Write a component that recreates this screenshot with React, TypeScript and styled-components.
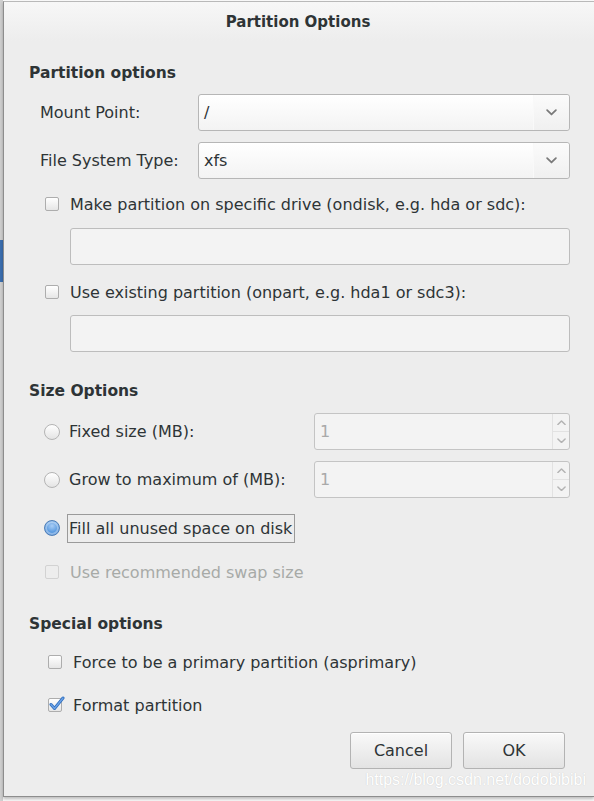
import React from 'react';
import styled, { createGlobalStyle } from 'styled-components';

const GlobalStyle = createGlobalStyle`
  html, body {
    margin: 0;
    padding: 0;
    background: #f4f4f4;
  }
  * { box-sizing: border-box; }
`;

const Page = styled.div`
  display: flex;
  width: 594px;
  height: 801px;
  overflow: hidden;
  background: #fbfbfb;
`;

const Edge = styled.div`
  width: 3px;
  flex-shrink: 0;
  background: linear-gradient(#cfcfcf 0 240px, #3b6fb0 240px 282px, #d0d0d0 282px);
`;

const Dialog = styled.div`
  position: relative;
  flex: 1;
  margin-top: 1px;
  height: 796px;
  background: #ededed;
  border-left: 1px solid #8d8d8d;
  border-top: 1px solid #b9b9b9;
  border-bottom: 1px solid #8d8d8d;
  box-shadow: 0 2px 3px rgba(0, 0, 0, 0.25);
  font-family: "DejaVu Sans", "Open Sans", sans-serif;
  font-size: 16px;
  color: #2e3436;
`;

const TitleBar = styled.div`
  height: 39px;
  display: flex;
  align-items: center;
  justify-content: center;
  padding-right: 2px;
  font-weight: 700;
  font-size: 15px;
  background: linear-gradient(#f7f7f7, #ededed);
`;

const Body = styled.div`
  display: flex;
  flex-direction: column;
  padding: 0 24px 0 25px;
`;

const Heading = styled.div<{ $mt: number }>`
  margin-top: ${p => p.$mt}px;
  height: 20px;
  line-height: 20px;
  font-weight: 700;
  font-size: 15.5px;
`;

const FieldRow = styled.div<{ $mt: number }>`
  margin-top: ${p => p.$mt}px;
  display: grid;
  grid-template-columns: 158px 1fr;
  align-items: center;
  padding-left: 11px;
`;

const Combo = styled.div`
  height: 37px;
  display: flex;
  border: 1px solid #b6b6b6;
  border-radius: 3px;
  background: linear-gradient(#ffffff, #f3f3f3);
  box-shadow: inset 0 1px 0 #fff;
`;

const ComboText = styled.div`
  flex: 1;
  display: flex;
  align-items: center;
  padding-left: 5px;
`;

const ComboButton = styled.div`
  width: 36px;
  display: flex;
  align-items: center;
  justify-content: center;
  border-left: 1px solid #f9f9f9;
  background: linear-gradient(#fbfbfb, #f0f0f0);
  border-radius: 0 3px 3px 0;
`;

const CheckRow = styled.label<{ $mt: number; $indent: number; $disabled?: boolean }>`
  margin-top: ${p => p.$mt}px;
  height: 20px;
  display: flex;
  align-items: center;
  gap: 11px;
  padding-left: ${p => p.$indent}px;
  color: ${p => (p.$disabled ? '#a7aaa7' : '#2e3436')};
`;

const Box = styled.span<{ $disabled?: boolean }>`
  position: relative;
  width: 14px;
  height: 14px;
  flex-shrink: 0;
  border: 1px solid ${p => (p.$disabled ? '#d2d2d2' : '#adadad')};
  border-radius: 2px;
  background: ${p => (p.$disabled ? '#ededed' : 'linear-gradient(#ffffff, #e6e6e6)')};
`;

const Tick = styled.svg`
  position: absolute;
  left: -1px;
  top: -4px;
`;

const Entry = styled.div<{ $mt: number }>`
  margin-top: ${p => p.$mt}px;
  margin-left: 41px;
  height: 37px;
  border: 1px solid #bdbdbd;
  border-radius: 3px;
  background: #f3f3f3;
`;

const RadioRow = styled.div<{ $mt: number }>`
  margin-top: ${p => p.$mt}px;
  display: grid;
  grid-template-columns: 270px 1fr;
  align-items: center;
  padding-left: 15px;
`;

const RadioLabel = styled.div`
  display: flex;
  align-items: center;
  gap: 9px;
  height: 30px;
`;

const Radio = styled.span<{ $on?: boolean }>`
  width: 16px;
  height: 16px;
  flex-shrink: 0;
  border-radius: 50%;
  border: 1px solid ${p => (p.$on ? '#4f7fb8' : '#b4b4b4')};
  background: ${p =>
    p.$on
      ? 'radial-gradient(circle at 50% 35%, #a9cdf5 0, #5b9be0 55%, #3f7ccc 100%)'
      : 'linear-gradient(#ffffff, #e4e4e4)'};
  box-shadow: ${p => (p.$on ? 'inset 0 0 0 2px rgba(255,255,255,0.35)' : 'none')};
`;

const RadioText = styled.span<{ $focus?: boolean }>`
  margin-left: ${p => (p.$focus ? -2 : 0)}px;
  padding: ${p => (p.$focus ? '4px 2px 4px 1px' : '0')};
  border: ${p => (p.$focus ? '1px solid #9a9a9a' : 'none')};
`;

const Spin = styled.div`
  height: 37px;
  display: flex;
  border: 1px solid #c4c4c4;
  border-radius: 3px;
  background: #f3f3f3;
  color: #a9a9a9;
`;

const SpinText = styled.div`
  flex: 1;
  display: flex;
  align-items: center;
  padding-left: 5px;
`;

const SpinButtons = styled.div`
  width: 17px;
  display: flex;
  flex-direction: column;
  border-left: 1px solid #e2e2e2;
`;

const SpinHalf = styled.div<{ $top?: boolean }>`
  flex: 1;
  display: flex;
  align-items: center;
  justify-content: center;
  border-bottom: ${p => (p.$top ? '1px solid #e2e2e2' : 'none')};
`;

const ButtonBar = styled.div`
  margin-top: 17px;
  display: flex;
  justify-content: flex-end;
  gap: 11px;
  padding-right: 5px;
`;

const Button = styled.button`
  width: 102px;
  height: 37px;
  border: 1px solid #b3b3b3;
  border-radius: 3px;
  background: linear-gradient(#f9f9f9, #e3e3e3);
  box-shadow: inset 0 1px 0 #fff;
  font-family: inherit;
  font-size: 16px;
  color: #2e3436;
`;

const Watermark = styled.div`
  position: absolute;
  right: 8px;
  bottom: 7px;
  font-family: "Liberation Sans", Arial, sans-serif;
  font-size: 16px;
  color: #ffffff;
  text-shadow: 0 0 1px #c4c4c4;
`;

const Chevron = ({ up, color, w }: { up?: boolean; color: string; w: number }) => (
  <svg width={w} height={w * 0.6} viewBox="0 0 10 6">
    <path
      d={up ? 'M1 5 L5 1 L9 5' : 'M1 1 L5 5 L9 1'}
      fill="none"
      stroke={color}
      strokeWidth="1.6"
      strokeLinecap="round"
      strokeLinejoin="round"
    />
  </svg>
);

const Check = ({ mt, indent, label, checked, disabled }: {
  mt: number; indent: number; label: string; checked?: boolean; disabled?: boolean;
}) => (
  <CheckRow $mt={mt} $indent={indent} $disabled={disabled}>
    <Box $disabled={disabled}>
      {checked && (
        <Tick width="17" height="17" viewBox="0 0 17 17">
          <path d="M3 9.5 L6.5 13.5 L15 3" fill="none" stroke="#2f6fc0" strokeWidth="3" strokeLinecap="round" strokeLinejoin="round" />
          <path d="M3 9.5 L6.5 13.5 L15 3" fill="none" stroke="#6ea3e6" strokeWidth="1.2" strokeLinecap="round" strokeLinejoin="round" />
        </Tick>
      )}
    </Box>
    {label}
  </CheckRow>
);

const SpinBox = () => (
  <Spin>
    <SpinText>1</SpinText>
    <SpinButtons>
      <SpinHalf $top><Chevron up color="#b3b3b3" w={9} /></SpinHalf>
      <SpinHalf><Chevron color="#b3b3b3" w={9} /></SpinHalf>
    </SpinButtons>
  </Spin>
);

const ComboBox = ({ value }: { value: string }) => (
  <Combo>
    <ComboText>{value}</ComboText>
    <ComboButton><Chevron color="#7a7a7a" w={11} /></ComboButton>
  </Combo>
);

export default function App() {
  return (
    <>
      <GlobalStyle />
      <Page>
        <Edge />
        <Dialog>
          <TitleBar>Partition Options</TitleBar>
          <Body>
            <Heading $mt={22}>Partition options</Heading>
            <FieldRow $mt={11}>
              <span>Mount Point:</span>
              <ComboBox value="/" />
            </FieldRow>
            <FieldRow $mt={11}>
              <span>File System Type:</span>
              <ComboBox value="xfs" />
            </FieldRow>
            <Check mt={15} indent={16} label="Make partition on specific drive (ondisk, e.g. hda or sdc):" />
            <Entry $mt={14} />
            <Check mt={17} indent={16} label="Use existing partition (onpart, e.g. hda1 or sdc3):" />
            <Entry $mt={13} />

            <Heading $mt={29}>Size Options</Heading>
            <RadioRow $mt={12}>
              <RadioLabel><Radio /><RadioText>Fixed size (MB):</RadioText></RadioLabel>
              <SpinBox />
            </RadioRow>
            <RadioRow $mt={11}>
              <RadioLabel><Radio /><RadioText>Grow to maximum of (MB):</RadioText></RadioLabel>
              <SpinBox />
            </RadioRow>
            <RadioRow $mt={15}>
              <RadioLabel><Radio $on /><RadioText $focus>Fill all unused space on disk</RadioText></RadioLabel>
            </RadioRow>
            <Check mt={19} indent={16} label="Use recommended swap size" disabled />

            <Heading $mt={32}>Special options</Heading>
            <Check mt={18} indent={19} label="Force to be a primary partition (asprimary)" />
            <Check mt={23} indent={19} label="Format partition" checked />

            <ButtonBar>
              <Button>Cancel</Button>
              <Button>OK</Button>
            </ButtonBar>
          </Body>
          <Watermark>https://blog.csdn.net/dodobibibi</Watermark>
        </Dialog>
      </Page>
    </>
  );
}
